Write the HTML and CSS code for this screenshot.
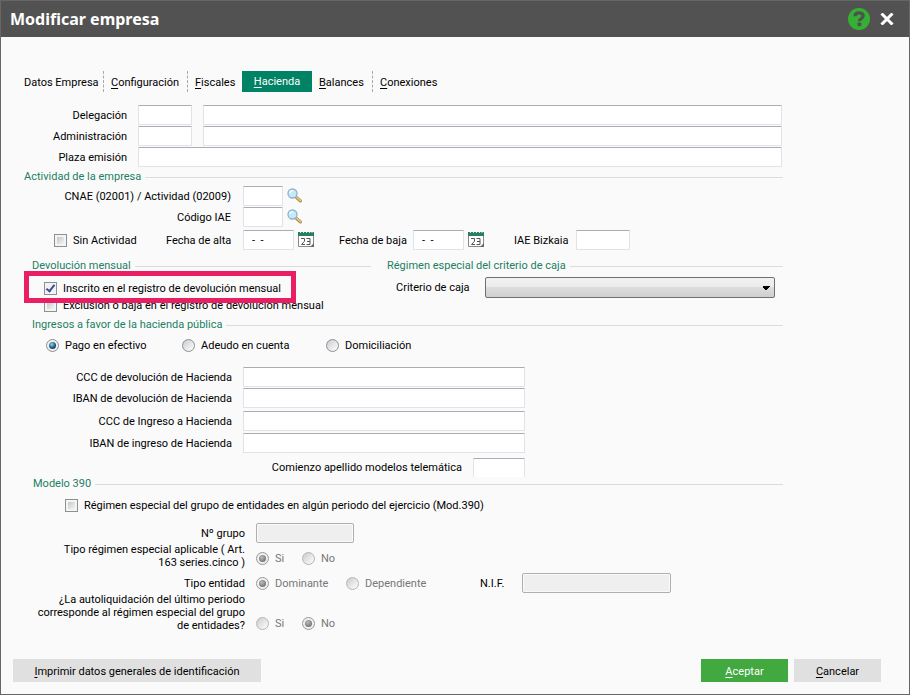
FILE: index.html
```html
<!DOCTYPE html>
<html lang="es">
<head>
  <meta charset="UTF-8">
  <meta name="viewport" content="width=device-width, initial-scale=1.0">
  <title>Modificar empresa</title>
  <link rel="stylesheet" href="styles.css">
</head>

<body>
  <svg class="sprite" width="0" height="0">
    <symbol id="lupa" viewBox="0 0 16 16">
      <path d="M9.500 9.500l4 3.500" stroke="#a98a4c" stroke-width="3" stroke-linecap="round"/>
      <path d="M9.800 9.400l3.700 3.300" stroke="#e8c47a" stroke-width="1.600" stroke-linecap="round"/>
      <circle cx="5.500" cy="5.500" r="4.500" fill="#c4eafa" stroke="#8fb3cc" stroke-width="1.300"/>
      <path d="M2.800 5.200a3 3 0 0 1 3-2.600" fill="none" stroke="#fff" stroke-width="1.200"/>
    </symbol>
    <symbol id="calendario" viewBox="0 0 16 16">
      <path d="M.5 1.500h15v13H.5z" fill="#fff" stroke="#888"/>
      <path d="M0 0h16v4H0z" fill="#27805f"/>
      <path d="M2.500 0v1M5.500 0v1M8.500 0v1M11.500 0v1M14 0v1" stroke="#cfe6dc"/>
      <path d="M3 6.500h3.500v2.700L3.500 12.500H7M8.500 6.500h3.500v6H8.500M9 9.500h3" fill="none" stroke="#555"/>
      <path d="M12 15l4-4v4z" fill="#666"/>
    </symbol>
  </svg>

  <form class="dialog">
    <header class="titlebar">
      <h1>Modificar empresa</h1>
      <button type="button" class="icon-button" aria-label="Ayuda">
        <svg width="22" height="22" viewBox="0 0 22 22">
          <circle cx="11" cy="11" r="11" fill="#35b035"/>
          <path d="M7 8.300C7 5.800 8.800 4.900 11 4.900s4.200.9 4.200 3.100c0 2.700-3.900 2.400-3.900 5.300" fill="none" stroke="#4b554b" stroke-width="3.200"/>
          <path d="M9.500 14.600h3.800v3.600H9.500z" fill="#4b554b"/>
        </svg>
      </button>
      <button type="button" class="icon-button" aria-label="Cerrar">
        <svg width="14" height="12" viewBox="0 0 14 12">
          <path d="M1.500 .5l11 11M12.500 .5l-11 11" stroke="#fff" stroke-width="3"/>
        </svg>
      </button>
    </header>

    <main class="content">
      <nav class="tabs">
        <button type="button" class="tab">Datos Empresa</button>
        <button type="button" class="tab"><u>C</u>onfiguración</button>
        <button type="button" class="tab last"><u>F</u>iscales</button>
        <button type="button" class="tab active"><u>H</u>acienda</button>
        <button type="button" class="tab"><u>B</u>alances</button>
        <button type="button" class="tab last"><u>C</u>onexiones</button>
      </nav>

      <div class="rows office">
        <div class="row">
          <label for="delegacion">Delegación</label>
          <input type="text" id="delegacion" class="code">
          <input type="text" class="grow" aria-label="Nombre delegación">
        </div>
        <div class="row">
          <label for="administracion">Administración</label>
          <input type="text" id="administracion" class="code">
          <input type="text" class="grow" aria-label="Nombre administración">
        </div>
        <div class="row">
          <label for="plaza">Plaza emisión</label>
          <input type="text" id="plaza" class="grow">
        </div>
      </div>

      <section class="activity">
        <h2>Actividad de la empresa</h2>
        <div class="rows">
          <div class="row">
            <label for="cnae">CNAE (02001) / Actividad (02009)</label>
            <input type="text" id="cnae" class="short">
            <button type="button" class="icon-button" aria-label="Buscar CNAE"><svg width="16" height="16"><use href="#lupa"/></svg></button>
          </div>
          <div class="row">
            <label for="iae">Código IAE</label>
            <input type="text" id="iae" class="short">
            <button type="button" class="icon-button" aria-label="Buscar IAE"><svg width="16" height="16"><use href="#lupa"/></svg></button>
          </div>
        </div>
        <div class="row dates">
          <label class="check"><input type="checkbox">Sin Actividad</label>
          <label for="alta" class="from">Fecha de alta</label>
          <input type="text" id="alta" class="date" value="-  -">
          <button type="button" class="icon-button" aria-label="Calendario alta"><svg width="16" height="16"><use href="#calendario"/></svg></button>
          <label for="baja" class="to">Fecha de baja</label>
          <input type="text" id="baja" class="date" value="-  -">
          <button type="button" class="icon-button" aria-label="Calendario baja"><svg width="16" height="16"><use href="#calendario"/></svg></button>
          <label for="bizkaia" class="bizkaia">IAE Bizkaia</label>
          <input type="text" id="bizkaia" class="code">
        </div>
      </section>

      <div class="columns">
        <section>
          <h2>Devolución mensual</h2>
          <div class="refund">
            <label class="check marked"><input type="checkbox" checked>Inscrito en el registro de devolución mensual</label>
            <label class="check"><input type="checkbox">Exclusión o baja en el registro de devolución mensual</label>
          </div>
        </section>
        <section>
          <h2>Régimen especial del criterio de caja</h2>
          <div class="cash">
            <label for="criterio">Criterio de caja</label>
            <select id="criterio"><option></option></select>
          </div>
        </section>
      </div>

      <section class="payments">
        <h2>Ingresos a favor de la hacienda pública</h2>
        <div class="methods">
          <label class="check"><input type="radio" name="pago" checked>Pago en efectivo</label>
          <label class="check"><input type="radio" name="pago">Adeudo en cuenta</label>
          <label class="check"><input type="radio" name="pago">Domiciliación</label>
        </div>
        <div class="accounts">
          <div class="rows">
            <div class="row">
              <label for="ccc-dev">CCC de devolución de Hacienda</label>
              <input type="text" id="ccc-dev" class="grow">
            </div>
            <div class="row">
              <label for="iban-dev">IBAN de devolución de Hacienda</label>
              <input type="text" id="iban-dev" class="grow">
            </div>
          </div>
          <div class="rows wide">
            <div class="row">
              <label for="ccc-ing">CCC de Ingreso a Hacienda</label>
              <input type="text" id="ccc-ing" class="grow">
            </div>
            <div class="row">
              <label for="iban-ing">IBAN de ingreso de Hacienda</label>
              <input type="text" id="iban-ing" class="grow">
            </div>
          </div>
          <div class="row surname">
            <label for="apellido">Comienzo apellido modelos telemática</label>
            <input type="text" id="apellido">
          </div>
        </div>
      </section>

      <section class="model">
        <h2>Modelo 390</h2>
        <label class="check group"><input type="checkbox">Régimen especial del grupo de entidades en algún periodo del ejercicio (Mod.390)</label>
        <div class="fields">
          <div class="row">
            <label for="grupo">Nº grupo</label>
            <input type="text" id="grupo" disabled>
          </div>
          <div class="row scheme" role="radiogroup" aria-labelledby="tipo-regimen">
            <span class="label" id="tipo-regimen">Tipo régimen especial aplicable ( Art. 163&nbsp;series.cinco )</span>
            <label class="check off"><input type="radio" name="regimen" checked disabled>Si</label>
            <label class="check off"><input type="radio" name="regimen" disabled>No</label>
          </div>
          <div class="row entity" role="radiogroup" aria-labelledby="tipo-entidad">
            <span class="label" id="tipo-entidad">Tipo entidad</span>
            <label class="check off"><input type="radio" name="entidad" checked disabled>Dominante</label>
            <label class="check off"><input type="radio" name="entidad" disabled>Dependiente</label>
            <label for="nif" class="nif">N.I.F.</label>
            <input type="text" id="nif" disabled>
          </div>
          <div class="row settlement" role="radiogroup" aria-labelledby="autoliquidacion">
            <span class="label" id="autoliquidacion">¿La autoliquidación del último periodo corresponde al régimen especial del grupo de entidades?</span>
            <label class="check off"><input type="radio" name="auto" disabled>Si</label>
            <label class="check off"><input type="radio" name="auto" checked disabled>No</label>
          </div>
        </div>
      </section>
    </main>

    <footer class="footer">
      <button type="button" class="btn print"><u>I</u>mprimir datos generales de identificación</button>
      <button type="button" class="btn accept"><u>A</u>ceptar</button>
      <button type="button" class="btn"><u>C</u>ancelar</button>
    </footer>
  </form>
</body>
</html>
```
FILE: styles.css
```css
*,
*::after {
  box-sizing: border-box;
}

body {
  margin: 0;
  background: #fafafa;
  color: #000;
  font: 11px/13px Roboto, "Liberation Sans", sans-serif;
}

button, input, select {
  margin: 0;
  font: inherit;
  color: inherit;
}

button {
  border: 0;
  padding: 0;
}

u {
  text-underline-offset: 2px;
}

.sprite {
  position: absolute;
}

.dialog {
  display: flex;
  flex-direction: column;
  min-height: 100vh;
  border: 1px solid #666;
}

/* title bar */
.titlebar {
  display: flex;
  align-items: center;
  height: 36px;
  padding: 0 15px 0 9px;
  gap: 10px;
  background: #525252;
}

.titlebar h1 {
  flex: 1;
  margin: 0;
  color: #fff;
  font: bold 16px/20px "Noto Sans", sans-serif;
}

.icon-button {
  display: flex;
  background: none;
}

.content {
  padding: 34px 126px 0 23px;
}

/* tabs */
.tabs {
  display: grid;
  grid-template-columns: 80px 84px 54px 70px 61px max-content;
  height: 21px;
  margin-bottom: 13px;
}

.tab {
  padding: 1px 0 0 7px;
  background: none;
  border-right: 1px dashed #aaa;
  text-align: left;
}

.tab:first-child {
  padding-left: 0;
}

.tab.last {
  border-right: 0;
}

.tab.active {
  padding: 0;
  border: 0;
  background: #008264;
  color: #fff;
  text-align: center;
}

/* rows */
.rows {
  display: grid;
  gap: 1px;
}

.row {
  display: flex;
  align-items: center;
}

.row > label:first-child,
.label {
  text-align: right;
}

input[type="text"] {
  width: 54px;
  min-width: 0;
  height: 20px;
  padding: 0 8px;
  border: 1px solid #e2e3ea;
  border-top-color: #abadb3;
  border-radius: 1px;
  background: #fff;
}

input[type="text"]:disabled {
  border: 1px solid #afafaf;
  border-radius: 2px;
  background: #efefef;
  box-shadow: inset 0 0 0 1px #fafafa;
}

input.grow {
  flex: 1;
}

input.short {
  width: 40px;
}

input.date {
  width: 51px;
  white-space: pre;
}

h2 {
  display: flex;
  align-items: center;
  gap: 4px;
  margin: 0;
  color: #1b8062;
  font-size: 11px;
  font-weight: normal;
  line-height: 14px;
}

h2::after {
  content: "";
  flex: 1;
  border-top: 1px solid #d9dbde;
}

.office {
  padding-right: 1px;
}

.office label {
  width: 103px;
  margin-right: 11px;
}

.office .code {
  margin-right: 11px;
}

.activity {
  margin-top: 3px;
}

.activity .rows {
  margin: 2px 0 3px;
}

.activity .rows label {
  width: 207px;
  margin-right: 12px;
}

.activity .icon-button {
  margin-left: 4px;
}

.dates .check {
  width: 112px;
  margin-left: 30px;
}

.dates .from {
  width: 77px;
}

.dates .to {
  width: 74px;
  margin-left: 25px;
}

.dates .bizkaia {
  width: 62px;
  margin-left: 30px;
}

/* check boxes and radios */
.check {
  display: flex;
  align-items: center;
  gap: 6px;
  height: 18px;
  white-space: nowrap;
}

.off {
  color: #777;
}

input[type="checkbox"],
input[type="radio"] {
  appearance: none;
  flex: none;
  display: grid;
  place-items: center;
  width: 13px;
  height: 13px;
  border: 1px solid #8e8f8f;
  background: linear-gradient(135deg, #c4c8cc, #f4f4f4) content-box, #f4f4f4;
  padding: 2px;
}

input[type="radio"] {
  border-radius: 50%;
  background: linear-gradient(135deg, #c8ccd0, #fff);
}

input[type="checkbox"]:checked {
  padding: 0 0 2px;
  background: #f0f2f5;
}

input[type="checkbox"]:checked::after {
  content: "";
  width: 5px;
  height: 9px;
  border: solid #3d4f94;
  border-width: 0 2px 2px 0;
  transform: rotate(38deg);
}

input[type="radio"]:checked {
  padding: 0;
  background: #f0f0f0;
}

input[type="radio"]:checked::after {
  content: "";
  width: 7px;
  height: 7px;
  border-radius: 50%;
  background: radial-gradient(circle at 40% 35%, #8fd8f4, #17496e 60%);
}

input[type="radio"]:disabled {
  border-color: #b5b5b5;
}

input[type="radio"]:disabled:checked {
  border-color: #999;
}

input[type="radio"]:disabled:checked::after {
  background: radial-gradient(circle at 40% 35%, #bbb, #777 70%);
}

/* refund and cash columns */
.columns {
  display: grid;
  grid-template-columns: 339fr 396fr;
  gap: 16px;
  margin: 9px 0 0 8px;
}

.refund {
  padding: 7px 0 0 12px;
}

.refund .check {
  height: 17px;
}

.marked {
  position: relative;
  width: max-content;
}

.marked::after {
  content: "";
  position: absolute;
  top: -9px;
  left: -20px;
  width: 272px;
  height: 32px;
  border: 5px solid #e91e63;
}

.cash {
  display: flex;
  align-items: center;
  padding: 4px 8px 0 9px;
}

.cash label {
  width: 89px;
}

.cash select {
  appearance: none;
  flex: 1;
  height: 21px;
  border: 1px solid #707070;
  border-radius: 2px;
  background:
    conic-gradient(from -45deg at 50% 100%, #000 90deg, transparent 0) right 4px center / 8px 4px no-repeat,
    linear-gradient(#f2f2f2, #ebebeb 50%, #dddddd 50%, #cfcfcf);
}

/* payments */
.payments {
  margin: 4px 0 0 8px;
}

.methods {
  display: grid;
  grid-template-columns: 136px 144px max-content;
  padding: 4px 0 13px 14px;
}

.accounts {
  width: 493px;
}

.accounts label {
  width: 200px;
  margin-right: 11px;
}

.accounts .wide {
  gap: 2px;
  margin: 3px 0 5px;
}

.surname {
  justify-content: flex-end;
}

.accounts .surname label {
  width: auto;
}

.accounts .surname input {
  width: 52px;
  height: 19px;
  border-bottom: 0;
}

/* model 390 */
.model {
  margin-left: 9px;
}

.group {
  margin: 5px 0 9px 32px;
}

.fields .label,
.fields .row > label:first-child {
  width: 212px;
  margin-right: 11px;
}

.fields #grupo {
  width: 98px;
}

.fields .off {
  width: 46px;
}

.scheme .off {
  margin-top: 4px;
}

.entity {
  margin-top: 4px;
}

.entity .off {
  width: 90px;
}

.entity .nif {
  width: 42px;
  margin-left: 44px;
}

.entity #nif {
  width: 149px;
}

.settlement {
  align-items: flex-end;
}

/* footer */
.footer {
  display: flex;
  gap: 6px;
  margin-top: auto;
  padding: 0 28px 12px 12px;
}

.btn {
  width: 87px;
  height: 23px;
  padding-top: 1px;
  background: #e0e0e0;
}

.btn.print {
  width: 248px;
  margin-right: auto;
}

.btn.accept {
  background: #42a840;
  color: #fff;
}
```
